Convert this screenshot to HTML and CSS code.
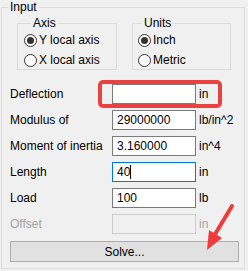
FILE: index.html
```html
<!DOCTYPE html>
<html>
<head>
<meta charset="utf-8">
<link rel="stylesheet" href="styles.css">
</head>
<body>
<fieldset class="outer">
  <legend class="outer-legend">Input</legend>
  <div class="groups">
    <fieldset class="group axis">
      <legend class="axis-legend">Axis</legend>
      <div class="radio"><span class="dot checked"></span><span>Y local axis</span></div>
      <div class="radio"><span class="dot"></span><span>X local axis</span></div>
    </fieldset>
    <fieldset class="group units">
      <legend class="units-legend">Units</legend>
      <div class="radio"><span class="dot checked"></span><span>Inch</span></div>
      <div class="radio"><span class="dot"></span><span>Metric</span></div>
    </fieldset>
  </div>
  <div class="form">
    <div class="row"><span class="lbl">Deflection</span><span class="box"></span><span class="unit">in</span></div>
    <div class="row"><span class="lbl">Modulus of</span><span class="box">29000000</span><span class="unit">lb/in^2</span></div>
    <div class="row"><span class="lbl">Moment of inertia</span><span class="box">3.160000</span><span class="unit">in^4</span></div>
    <div class="row"><span class="lbl">Length</span><span class="box focus">40<span class="caret"></span></span><span class="unit">in</span></div>
    <div class="row"><span class="lbl">Load</span><span class="box">100</span><span class="unit">lb</span></div>
    <div class="row disabled"><span class="lbl">Offset</span><span class="box"></span><span class="unit">in</span></div>
  </div>
  <button class="solve" type="button">Solve...</button>
</fieldset>
<div class="highlight"></div>
<svg class="arrow" width="248" height="271" viewBox="0 0 248 271">
  <line x1="232" y1="206" x2="214" y2="236" stroke="#ee3b3b" stroke-width="4" stroke-linecap="round"/>
  <polygon points="207,250 209,230 222,238" fill="#ee3b3b"/>
</svg>
</body>
</html>
```
FILE: styles.css
```css
html, body {
  margin: 0;
  padding: 0;
  background: #f0f0f0;
}
body {
  position: relative;
  width: 248px;
  height: 271px;
  overflow: hidden;
  font-family: "Liberation Sans", Arial, sans-serif;
  font-size: 12px;
  color: #000;
}
fieldset {
  margin: 0;
  padding: 0;
  min-width: 0;
  box-sizing: border-box;
  border: 1px solid #dcdcdc;
}
legend {
  line-height: 14px;
  padding: 0 2px;
}
.outer {
  margin-left: 1px;
  width: 244px;
  height: 269px;
}
.outer-legend {
  margin-left: 6px;
}
.groups {
  display: flex;
  gap: 15px;
  padding-left: 15px;
  margin-top: 2px;
}
.group {
  height: 54px;
  display: flex;
  flex-direction: column;
  gap: 4px;
  padding-top: 2px;
}
.axis {
  width: 100px;
  padding-left: 6px;
}
.units {
  width: 99px;
  padding-left: 5px;
}
.axis-legend {
  margin-left: 7px;
}
.units-legend {
  margin-left: 4px;
}
.radio {
  display: flex;
  align-items: center;
  height: 16px;
}
.dot {
  width: 13px;
  height: 13px;
  box-sizing: border-box;
  border: 1px solid #333;
  border-radius: 50%;
  background: #fff;
  margin-right: 2px;
  display: flex;
  align-items: center;
  justify-content: center;
}
.dot.checked::after {
  content: "";
  width: 7px;
  height: 7px;
  border-radius: 50%;
  background: #333;
}
.form {
  display: flex;
  flex-direction: column;
  gap: 6px;
  margin-top: 14px;
  padding-left: 8px;
}
.row {
  display: grid;
  grid-template-columns: 102px 84px auto;
  align-items: center;
  height: 20px;
}
.box {
  height: 20px;
  box-sizing: border-box;
  border: 1px solid #7a7a7a;
  background: #fff;
  padding: 0 4px;
  display: flex;
  align-items: center;
}
.box.focus {
  border-color: #0078d7;
}
.caret {
  width: 1px;
  height: 14px;
  background: #000;
}
.unit {
  margin-left: 3px;
}
.row.disabled .lbl,
.row.disabled .unit {
  color: #a2a2a2;
}
.row.disabled .box {
  border-color: #cccccc;
  background: #f0f0f0;
}
.solve {
  display: block;
  margin: 7px 0 0 8px;
  width: 229px;
  height: 21px;
  padding: 0;
  border: 1px solid #adadad;
  background: #e1e1e1;
  font: inherit;
  color: #000;
}
.highlight {
  position: absolute;
  left: 98px;
  top: 80px;
  width: 124px;
  height: 28px;
  box-sizing: border-box;
  border: 4px solid #e84343;
  border-radius: 5px;
}
.arrow {
  position: absolute;
  left: 0;
  top: 0;
  pointer-events: none;
}
```
